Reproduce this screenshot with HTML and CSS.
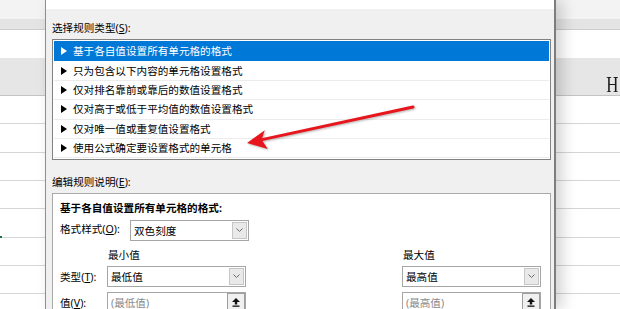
FILE: index.html
```html
<!DOCTYPE html>
<html lang="zh-CN">
<head>
<meta charset="utf-8">
<title>新建格式规则</title>
<link rel="stylesheet" href="styles.css">
</head>
<body>
<div class="screen">
  <div class="sheet">
    <div class="band1"></div>
    <div class="band2"></div>
    <div class="blank"></div>
    <div class="colhead"><span class="h">H</span></div>
    <div class="row"></div>
    <div class="row"></div>
    <div class="row"></div>
    <div class="row"></div>
    <div class="row"><span class="handle"></span></div>
    <div class="row"></div>
    <div class="row"></div>
    <div class="row"></div>
  </div>

  <div class="dialog">
    <div class="dlg-top"></div>
    <div class="dlg-body">
      <div class="lbl lbl-first">选择规则类型(<u>S</u>):</div>
      <div class="listbox">
        <div class="item sel"><span class="tri"></span>基于各自值设置所有单元格的格式</div>
        <div class="item"><span class="tri"></span>只为包含以下内容的单元格设置格式</div>
        <div class="item"><span class="tri"></span>仅对排名靠前或靠后的数值设置格式</div>
        <div class="item"><span class="tri"></span>仅对高于或低于平均值的数值设置格式</div>
        <div class="item"><span class="tri"></span>仅对唯一值或重复值设置格式</div>
        <div class="item"><span class="tri"></span>使用公式确定要设置格式的单元格</div>
      </div>
      <div class="lbl lbl-second">编辑规则说明(<u>E</u>):</div>
      <div class="group">
        <div class="gtitle">基于各自值设置所有单元格的格式:</div>
        <div class="stylerow">
          <span class="slabel">格式样式(<u>O</u>):</span>
          <div class="combo wide"><span class="ctext">双色刻度</span><span class="ddbtn"><svg width="7" height="5" viewBox="0 0 7 5"><polyline points="0.5,0.5 3.5,3.5 6.5,0.5" fill="none" stroke="#6a6a6a" stroke-width="1"/></svg></span></div>
        </div>
        <div class="fgrid">
          <span></span><span class="colh">最小值</span><span></span><span class="colh">最大值</span>

          <span class="flabel">类型(<u>T</u>):</span>
          <div class="combo"><span class="ctext">最低值</span><span class="ddbtn"><svg width="7" height="5" viewBox="0 0 7 5"><polyline points="0.5,0.5 3.5,3.5 6.5,0.5" fill="none" stroke="#6a6a6a" stroke-width="1"/></svg></span></div>
          <span></span>
          <div class="combo"><span class="ctext">最高值</span><span class="ddbtn"><svg width="7" height="5" viewBox="0 0 7 5"><polyline points="0.5,0.5 3.5,3.5 6.5,0.5" fill="none" stroke="#6a6a6a" stroke-width="1"/></svg></span></div>

          <span class="flabel">值(<u>V</u>):</span>
          <div class="input"><span class="ph">(最低值)</span><span class="upbtn"><svg width="8" height="9" viewBox="0 0 8 9"><path d="M4 0 L8 4 L5.2 4 L5.2 6.5 L2.8 6.5 L2.8 4 L0 4 Z" fill="#111"/><rect x="0.5" y="7.5" width="7" height="1.3" fill="#111"/></svg></span></div>
          <span></span>
          <div class="input"><span class="ph">(最高值)</span><span class="upbtn"><svg width="8" height="9" viewBox="0 0 8 9"><path d="M4 0 L8 4 L5.2 4 L5.2 6.5 L2.8 6.5 L2.8 4 L0 4 Z" fill="#111"/><rect x="0.5" y="7.5" width="7" height="1.3" fill="#111"/></svg></span></div>
        </div>
      </div>
    </div>
  </div>

  <svg class="arrow" width="620" height="309" viewBox="0 0 620 309">
    <g class="arrow-g">
      <line x1="413" y1="107" x2="262" y2="139.6" stroke="#e8161c" stroke-width="3" stroke-linecap="round"/>
      <polygon points="247,143 264.8,130.2 261.6,139.8 267.8,149" fill="#e8161c"/>
    </g>
  </svg>
</div>
</body>
</html>
```

FILE: styles.css
```css
body {
  margin: 0;
  background: #ffffff;
}

.screen {
  position: relative;
  width: 620px;
  height: 309px;
  overflow: hidden;
  font-family: "Noto Sans", "Noto Sans CJK SC", sans-serif;
  font-size: 10.6px;
  color: #000;
}

/* spreadsheet backdrop */
.sheet {
  display: flex;
  flex-direction: column;
  width: 620px;
}
.band1 {
  height: 19px;
  background: #f3f3f3;
}
.band2 {
  height: 10px;
  background: #e4e4e4;
  border-bottom: 1px solid #cdcdcd;
}
.blank {
  height: 28px;
  background: #ffffff;
}
.colhead {
  height: 38px;
  box-sizing: border-box;
  background: #e6e6e6;
  border-bottom: 1px solid #c4c4c4;
  padding-top: 14px;
  text-align: right;
  line-height: 24px;
  font-family: "Liberation Serif", serif;
  font-size: 24px;
  color: #1a1a1a;
}
.h {
  display: inline-block;
  transform: scaleX(0.7);
  transform-origin: right center;
  margin-right: 2px;
}
.row {
  position: relative;
  height: 27.33px;
  border-bottom: 1px solid #d6d6d6;
  background: #fff;
}
.handle {
  position: absolute;
  left: 0;
  bottom: -2px;
  width: 2px;
  height: 3px;
  background: #217346;
}

/* dialog window */
.dialog {
  position: absolute;
  left: 45px;
  top: 0;
  width: 511px;
  height: 309px;
  box-sizing: border-box;
  border-left: 1px solid #8e8e8e;
  border-right: 2px solid #7d7d7d;
  background: #f0f0f0;
  box-shadow: 6px 0 14px rgba(0, 0, 0, 0.18);
  overflow: hidden;
}
.dlg-top {
  height: 9px;
  background: #ffffff;
}
.dlg-body {
  padding: 0 3px 0 6px;
}
.lbl {
  line-height: 14px;
  height: 14px;
  white-space: nowrap;
}
.lbl-first {
  margin-top: 12px;
}
.lbl-second {
  margin-top: 15px;
}
u {
  text-decoration: underline;
  text-underline-offset: 1px;
}

.listbox {
  margin-top: 4px;
  border: 1px solid #828282;
  background: #ffffff;
  padding: 1px;
}
.item {
  height: 18.4px;
  border-bottom: 1px solid #ececec;
  display: flex;
  align-items: center;
  padding-left: 7px;
  padding-top: 1px;
  box-sizing: content-box;
  line-height: 14px;
  white-space: nowrap;
  margin-top: -1px;
}
.item:first-child {
  margin-top: 0;
}
.item.sel {
  background: #0078d7;
  color: #ffffff;
  border-bottom-color: #0078d7;
}
.tri {
  width: 0;
  height: 0;
  border-top: 4px solid transparent;
  border-bottom: 4px solid transparent;
  border-left: 6px solid #000;
  margin-right: 6px;
}
.item.sel .tri {
  border-left-color: #ffffff;
}

.group {
  margin-top: 4px;
  border: 1px solid #a9a9a9;
  background: #ffffff;
  padding: 7px 9px 0 7px;
  height: 140px;
}
.gtitle {
  line-height: 14px;
  font-weight: bold;
  white-space: nowrap;
}
.stylerow {
  margin-top: 5px;
  display: flex;
  align-items: center;
}
.slabel {
  width: 70px;
  line-height: 14px;
  padding-bottom: 4px;
  white-space: nowrap;
}

.combo,
.input {
  height: 21px;
  box-sizing: border-box;
  border: 1px solid #a6a6a6;
  background: #ffffff;
  display: flex;
  align-items: center;
  justify-content: space-between;
  padding: 1px 1px 1px 3px;
}
.combo.wide {
  width: 119px;
}
.ctext {
  line-height: 14px;
  white-space: nowrap;
}
.ddbtn {
  width: 15px;
  height: 17px;
  box-sizing: border-box;
  background: #e9e9e9;
  border: 1px solid #c6c6c6;
  display: flex;
  align-items: center;
  justify-content: center;
}
.ph {
  color: #8a8a8a;
  line-height: 14px;
  white-space: nowrap;
}
.upbtn {
  width: 18px;
  height: 19px;
  box-sizing: border-box;
  background: #f0f0f0;
  border: 1px solid #9e9e9e;
  display: flex;
  align-items: center;
  justify-content: center;
  margin-right: -1px;
}

.fgrid {
  display: grid;
  grid-template-columns: 47px 139px 1fr 139px;
  grid-template-rows: 14px 25px 26px;
  margin-top: 7px;
}
.colh {
  line-height: 14px;
  padding-left: 1px;
  white-space: nowrap;
}
.fgrid .combo,
.fgrid .input {
  align-self: end;
}
.flabel {
  align-self: end;
  height: 21px;
  display: flex;
  align-items: center;
  white-space: nowrap;
  line-height: 14px;
}

/* red annotation arrow */
.arrow {
  position: absolute;
  left: 0;
  top: 0;
  pointer-events: none;
}
.arrow-g {
  filter: drop-shadow(1px 1.5px 1px rgba(0, 0, 0, 0.3));
}
```
